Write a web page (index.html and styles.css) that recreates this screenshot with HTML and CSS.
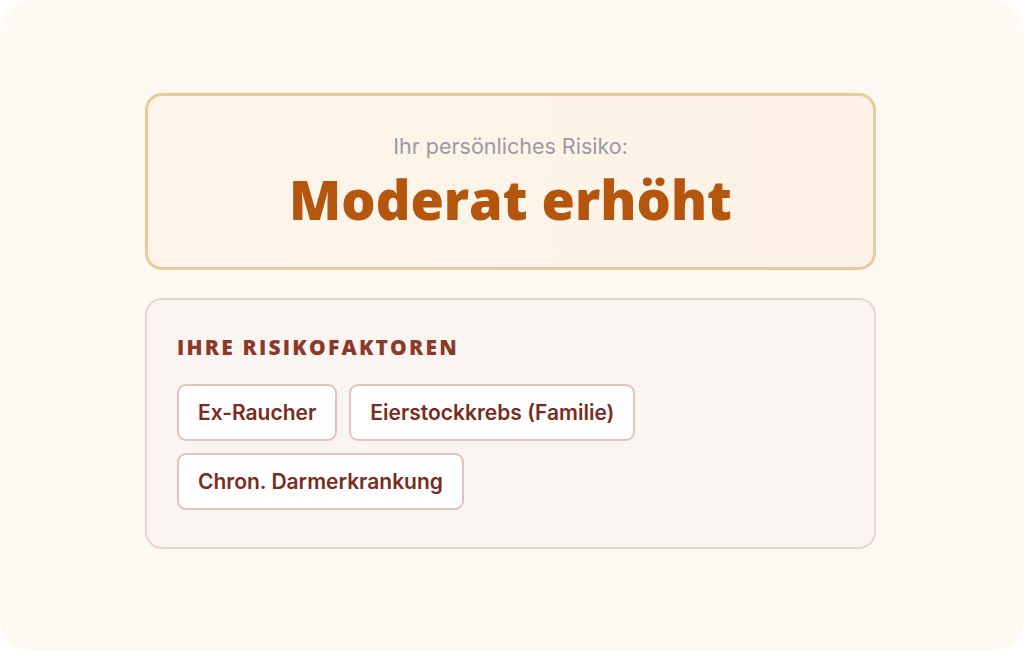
FILE: index.html
```html
<!DOCTYPE html>
<html lang="de">

<head>
    <meta charset="UTF-8">
    <meta name="viewport" content="width=device-width, initial-scale=1.0">
    <title>Ihr Risiko</title>
    <link rel="stylesheet" href="styles.css">
</head>

<body>
    <div class="screen">
        <div class="result-card">
            <p class="result-label">Ihr persönliches Risiko:</p>
            <h1 class="result-value">Moderat erhöht</h1>
        </div>

        <div class="factors-card">
            <h2 class="factors-title">Ihre Risikofaktoren</h2>
            <div class="chips">
                <span class="chip">Ex-Raucher</span>
                <span class="chip">Eierstockkrebs (Familie)</span>
                <span class="chip">Chron. Darmerkrankung</span>
            </div>
        </div>
    </div>
</body>
</html>
```

FILE: styles.css
```css
html,
body {
    margin: 0;
    padding: 0;
    background: #ffffff;
}

body {
    font-family: 'Inter', 'Noto Sans', sans-serif;
}

.screen {
    box-sizing: border-box;
    width: 1024px;
    height: 651px;
    background: #fef9f3;
    border-radius: 32px;
    padding: 93px 148px 0 145px;
    display: flex;
    flex-direction: column;
    gap: 28px;
}

.result-card {
    box-sizing: border-box;
    height: 177px;
    border: 3px solid #e9cb9b;
    border-radius: 17px;
    background: linear-gradient(90deg, #fef5ea, #fef2e6);
    text-align: center;
    padding-top: 35px;
}

.result-label {
    margin: 0;
    font-size: 21.5px;
    color: #9b9aa3;
    line-height: 30px;
}

.result-value {
    margin: 4px 0 0;
    font-family: 'Open Sans', sans-serif;
    font-weight: 800;
    font-size: 54px;
    line-height: 68px;
    color: #b5560f;
}

.factors-card {
    box-sizing: border-box;
    height: 251px;
    border: 2px solid #ecd5cf;
    border-radius: 17px;
    background: #fbf5f2;
    padding: 33px 30px 0;
}

.factors-title {
    margin: 0;
    font-family: 'Open Sans', sans-serif;
    font-weight: 800;
    font-size: 21px;
    letter-spacing: 2.2px;
    text-transform: uppercase;
    color: #8b3a29;
    line-height: 28px;
}

.chips {
    display: flex;
    flex-wrap: wrap;
    gap: 12px 12px;
    margin-top: 23px;
    width: 560px;
}

.chip {
    box-sizing: border-box;
    height: 57px;
    display: inline-flex;
    align-items: center;
    padding: 0 19px;
    border: 2px solid #e1c3bd;
    border-radius: 9px;
    background: #ffffff;
    font-size: 21px;
    font-weight: 600;
    color: #7a2c21;
}
```
